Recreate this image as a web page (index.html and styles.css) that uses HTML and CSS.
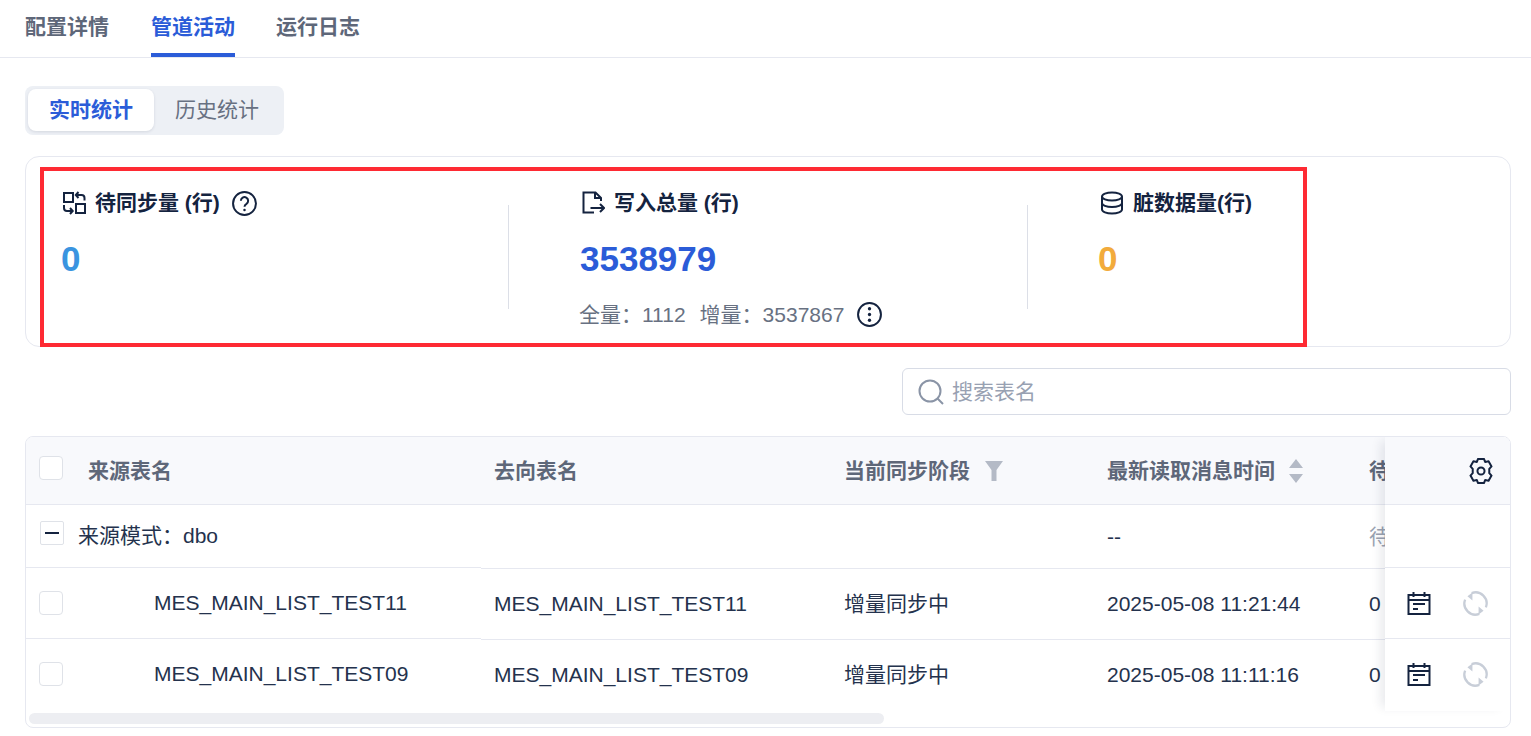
FILE: index.html
```html
<!DOCTYPE html>
<html lang="zh-CN">
<head>
    <meta charset="UTF-8">
    <title>管道活动</title>
    <link rel="stylesheet" href="styles.css">
</head>
<body>

<div class="tabs">
    <div class="tab">配置详情</div>
    <div class="tab tab-active">管道活动</div>
    <div class="tab">运行日志</div>
</div>

<div class="content">
    <div class="segment">
        <div class="segment-item segment-active">实时统计</div>
        <div class="segment-item">历史统计</div>
    </div>

    <div class="stat-card">
        <div class="stat">
            <div class="stat-label">
                <svg class="stat-icon" viewBox="0 0 24 24" fill="none" stroke="currentColor" stroke-width="2">
                    <rect x="2" y="2" width="9" height="9"/>
                    <rect x="14" y="13" width="9" height="9"/>
                    <path d="M14 4h5.500a3 3 0 0 1 3 3v2.500M16.500 1 13.800 4l2.700 3"/>
                    <path d="M10.500 20H5a3 3 0 0 1-3-3v-3M8 17 10.700 20 8 23"/>
                </svg>
                <span>待同步量 (行)</span>
                <svg class="stat-help" viewBox="0 0 24 24" fill="none" stroke="currentColor" stroke-width="1.900">
                    <circle cx="12" cy="12" r="11"/>
                    <path d="M8.500 9.300a3.500 3.500 0 1 1 5.400 3c-1.300.8-1.900 1.500-1.900 2.900"/>
                    <circle cx="12" cy="18.300" r="1.200" fill="currentColor" stroke="none"/>
                </svg>
            </div>
            <div class="stat-value value-sky">0</div>
        </div>
        <div class="stat-divider"></div>
        <div class="stat">
            <div class="stat-label">
                <svg class="stat-icon" viewBox="0 0 24 24" fill="none" stroke="currentColor" stroke-width="2">
                    <path d="M20 10V7l-5.500-5.500H2.500v20H13"/>
                    <path d="M14 1.500V7h6"/>
                    <path d="M9.500 17H23M19 13l4 4-4 4"/>
                </svg>
                <span>写入总量 (行)</span>
            </div>
            <div class="stat-value value-blue">3538979</div>
            <div class="stat-sub">
                <span>全量：1112</span>
                <span>增量：3537867</span>
                <svg class="stat-help" viewBox="0 0 24 24" fill="none" stroke="#14233f" stroke-width="1.900">
                    <circle cx="12" cy="12" r="11"/>
                    <circle cx="12" cy="6.500" r="1.600" fill="#14233f" stroke="none"/>
                    <circle cx="12" cy="12" r="1.600" fill="#14233f" stroke="none"/>
                    <circle cx="12" cy="17.500" r="1.600" fill="#14233f" stroke="none"/>
                </svg>
            </div>
        </div>
        <div class="stat-divider"></div>
        <div class="stat stat-last">
            <div class="stat-label">
                <svg class="stat-icon" viewBox="0 0 24 24" fill="none" stroke="currentColor" stroke-width="2">
                    <ellipse cx="12" cy="5.500" rx="10" ry="4"/>
                    <path d="M2 5.500v13c0 2.200 4.500 4 10 4s10-1.800 10-4v-13"/>
                    <path d="M2 12c0 2.200 4.500 4 10 4s10-1.800 10-4"/>
                </svg>
                <span>脏数据量(行)</span>
            </div>
            <div class="stat-value value-orange">0</div>
        </div>
        <div class="highlight-box"></div>
    </div>

    <div class="search-row">
        <div class="search-box">
            <svg class="search-icon" viewBox="0 0 26 26" fill="none" stroke="#8a94a6" stroke-width="2">
                <circle cx="12" cy="12" r="10.500"/>
                <path d="M19.500 19.500 25 25"/>
            </svg>
            <span>搜索表名</span>
        </div>
    </div>

    <div class="data-table">
        <div class="table-body">
            <div class="pane-left">
                <div class="left-row head-row">
                    <span class="checkbox"></span>
                    <span class="head-title">来源表名</span>
                </div>
                <div class="left-row group-row">
                    <span class="checkbox checkbox-minus"></span>
                    <span class="group-title">来源模式：dbo</span>
                </div>
                <div class="left-row item-row">
                    <span class="checkbox"></span>
                    <span class="item-name">MES_MAIN_LIST_TEST11</span>
                </div>
                <div class="left-row item-row item-last">
                    <span class="checkbox"></span>
                    <span class="item-name">MES_MAIN_LIST_TEST09</span>
                </div>
            </div>

            <div class="pane-middle">
                <div class="mid-row head-row">
                    <div class="head-title">去向表名</div>
                    <div class="head-title head-cell">
                        当前同步阶段
                        <svg class="head-filter" viewBox="0 0 18 20"><path d="M0 0h18l-6.500 9v11H6.500V9z" fill="#b4bac6"/></svg>
                    </div>
                    <div class="head-title head-cell">
                        最新读取消息时间
                        <svg class="head-sort" viewBox="0 0 14 24"><path d="M7 0l7 9H0zM0 15h14l-7 9z" fill="#b4bac6"/></svg>
                    </div>
                    <div class="head-title">待同步量</div>
                </div>
                <div class="mid-row group-mid">
                    <div></div>
                    <div></div>
                    <div>--</div>
                    <div class="cell-muted">待同步量</div>
                </div>
                <div class="mid-row item-mid">
                    <div>MES_MAIN_LIST_TEST11</div>
                    <div>增量同步中</div>
                    <div>2025-05-08 11:21:44</div>
                    <div>0</div>
                </div>
                <div class="mid-row item-mid item-last">
                    <div>MES_MAIN_LIST_TEST09</div>
                    <div>增量同步中</div>
                    <div>2025-05-08 11:11:16</div>
                    <div>0</div>
                </div>
            </div>

            <div class="pane-right">
                <div class="right-row head-row right-head">
                    <svg class="gear-icon" viewBox="2 1 20 22" fill="none" stroke="#14233f" stroke-width="1.700" stroke-linejoin="round">
                        <path d="M9.500 1.800h5l1 2.500 2.900-.5 2.500 4.300-1.900 2.100v3.600l1.900 2.100-2.500 4.300-2.900-.5-1 2.500h-5l-1-2.500-2.900.5-2.500-4.300 1.900-2.100v-3.600l-1.900-2.100 2.500-4.300 2.900.5z"/>
                        <circle cx="12" cy="12" r="3"/>
                    </svg>
                </div>
                <div class="right-row group-right"></div>
                <div class="right-row action-row">
                    <svg class="cal-icon" viewBox="0 0 24 24" fill="none" stroke="#14233f" stroke-width="2">
                        <path d="M1.500 4h21v19h-21zM1.500 9h21M6.500 1v5M17.500 1v5M6 13h12M6 18h5"/>
                    </svg>
                    <svg class="sync-icon" viewBox="0 0 26 26" fill="none" stroke="#c8ced8" stroke-width="2.400">
                        <path d="M9 2.200A11.500 11.500 0 0 1 23.800 17"/>
                        <path d="M17 23.800A11.500 11.500 0 0 1 2.200 9"/>
                        <path d="M9.800 1.500v8.500L4.600 5.500zM16.200 24.500V16l5.200 4.500z" fill="#c8ced8" stroke="none"/>
                    </svg>
                </div>
                <div class="right-row action-row item-last">
                    <svg class="cal-icon" viewBox="0 0 24 24" fill="none" stroke="#14233f" stroke-width="2">
                        <path d="M1.500 4h21v19h-21zM1.500 9h21M6.500 1v5M17.500 1v5M6 13h12M6 18h5"/>
                    </svg>
                    <svg class="sync-icon" viewBox="0 0 26 26" fill="none" stroke="#c8ced8" stroke-width="2.400">
                        <path d="M9 2.200A11.500 11.500 0 0 1 23.800 17"/>
                        <path d="M17 23.800A11.500 11.500 0 0 1 2.200 9"/>
                        <path d="M9.800 1.500v8.500L4.600 5.500zM16.200 24.500V16l5.200 4.500z" fill="#c8ced8" stroke="none"/>
                    </svg>
                </div>
            </div>
        </div>
        <div class="table-scroll">
            <div class="table-thumb"></div>
        </div>
    </div>
</div>

</body>
</html>
```

FILE: styles.css
```css
:root {
    --blue: #2b5cd8;
    --dark: #14233f;
    --text: #24324d;
    --gray: #5e6779;
    --line: #e6e8f0;
}

body {
    margin: 0;
    height: 736px;
    overflow: hidden;
    background-color: #fff;
    color: var(--text);
    font-family: "Liberation Sans", "Noto Sans CJK SC", sans-serif;
    font-size: 21px;
    line-height: 24px;
}

/* top tabs */
.tabs {
    display: flex;
    gap: 42px;
    height: 57px;
    padding-left: 25px;
    border-bottom: 1px solid var(--line);
}

.tab {
    height: 57px;
    line-height: 54px;
    box-sizing: border-box;
    font-weight: 700;
    color: var(--gray);
}

.tab-active {
    margin-right: -1px;
    color: var(--blue);
    border-bottom: 4px solid var(--blue);
}

.content {
    padding: 28px 20px 0 25px;
}

/* realtime / history switch */
.segment {
    display: flex;
    width: 259px;
    height: 49px;
    box-sizing: border-box;
    padding: 3px;
    border-radius: 8px;
    background-color: #edf0f5;
}

.segment-item {
    width: 126px;
    height: 42px;
    line-height: 42px;
    text-align: center;
    color: #687182;
}

.segment-active {
    font-weight: 700;
    color: var(--blue);
    background-color: #fff;
    border-radius: 8px;
    box-shadow: 0 1px 3px rgba(30, 40, 70, 0.12);
}

/* stat card */
.stat-card {
    position: relative;
    display: flex;
    height: 191px;
    box-sizing: border-box;
    margin-top: 21px;
    padding: 32px 0 0 35px;
    border: 1px solid var(--line);
    border-radius: 14px;
}

.highlight-box {
    position: absolute;
    left: 14px;
    top: 10px;
    width: 1267px;
    height: 180px;
    box-sizing: border-box;
    border: 4px solid #fe2a33;
}

.stat {
    width: 447px;
}

.stat-last {
    width: auto;
}

.stat-divider {
    width: 1px;
    height: 104px;
    margin: 16px 71px 0 0;
    background-color: #dcdfe7;
}

.stat-label {
    display: flex;
    align-items: center;
    gap: 9px;
    height: 28px;
    font-weight: 700;
    color: var(--dark);
}

.stat-icon {
    width: 24px;
    height: 24px;
    margin-left: 1px;
    flex-shrink: 0;
}

.stat-help {
    width: 25px;
    height: 25px;
    margin-left: 3px;
    flex-shrink: 0;
}

.stat-value {
    margin-top: 18px;
    height: 48px;
    line-height: 48px;
    font-size: 35px;
    font-weight: 700;
}

.value-sky {
    color: #3a94e0;
}

.value-blue {
    color: var(--blue);
}

.value-orange {
    margin-left: -1px;
    color: #f2ab3c;
}

.stat-sub {
    display: flex;
    align-items: center;
    gap: 14px;
    margin-top: 19px;
    margin-left: -1px;
    color: #687182;
    white-space: nowrap;
}

.stat-sub .stat-help {
    margin-left: -1px;
}

/* search */
.search-row {
    display: flex;
    justify-content: flex-end;
    margin-top: 21px;
}

.search-box {
    display: flex;
    align-items: center;
    gap: 8px;
    width: 609px;
    height: 47px;
    box-sizing: border-box;
    padding-left: 15px;
    border: 1px solid #d8dce6;
    border-radius: 6px;
    color: #98a1b2;
}

.search-icon {
    width: 26px;
    height: 26px;
}

/* table */
.data-table {
    margin-top: 21px;
    height: 292px;
    box-sizing: border-box;
    border: 1px solid var(--line);
    border-radius: 8px;
    overflow: hidden;
}

.table-body {
    display: flex;
    height: 274px;
}

.head-row {
    height: 67px;
    background-color: #f8f9fc;
    border-bottom: 1px solid var(--line);
}

.head-title {
    font-weight: 700;
    color: var(--gray);
    white-space: nowrap;
}

.pane-left {
    width: 455px;
    flex-shrink: 0;
}

.left-row {
    display: flex;
    align-items: center;
    padding-left: 13px;
    border-bottom: 1px solid var(--line);
}

.left-row .head-title {
    margin-left: 25px;
}

.left-row.head-row .checkbox {
    margin-top: -5px;
}

.group-row {
    height: 62px;
    padding-left: 14px;
}

.item-row {
    height: 70px;
}

.checkbox {
    width: 22px;
    height: 22px;
    flex-shrink: 0;
    border: 1px solid #dfe2e8;
    border-radius: 4px;
    background-color: #fff;
}

.checkbox-minus {
    position: relative;
    margin-top: -6px;
    border-radius: 2px;
}

.checkbox-minus::after {
    content: "";
    position: absolute;
    left: 4px;
    top: 10px;
    width: 14px;
    height: 2px;
    background-color: var(--dark);
}

.group-title {
    margin-left: 14px;
}

.item-name {
    margin-left: 91px;
    white-space: nowrap;
}

.pane-middle {
    flex: 1;
    min-width: 0;
    overflow: hidden;
}

.mid-row {
    display: grid;
    grid-template-columns: 350px 263px 262px 200px;
    align-items: center;
    padding-left: 13px;
    border-bottom: 1px solid var(--line);
    white-space: nowrap;
}

.head-cell {
    display: flex;
    align-items: center;
}

.head-filter {
    width: 18px;
    height: 20px;
    margin-left: 15px;
}

.head-sort {
    width: 14px;
    height: 24px;
    margin-left: 14px;
}

.group-mid {
    height: 63px;
}

.item-mid {
    height: 70px;
}

.cell-muted {
    color: #9aa2b1;
}

.pane-right {
    position: relative;
    width: 125px;
    flex-shrink: 0;
    background-color: #fff;
    box-shadow: -8px 0 10px -4px rgba(30, 40, 70, 0.1);
}

.right-row {
    border-bottom: 1px solid var(--line);
}

.right-head {
    display: flex;
    align-items: center;
    justify-content: flex-end;
    padding-right: 17px;
}

.group-right {
    height: 62px;
}

.action-row {
    display: flex;
    align-items: center;
    height: 70px;
    padding-left: 22px;
    gap: 32px;
}

.gear-icon {
    width: 24px;
    height: 26px;
}

.cal-icon {
    width: 24px;
    height: 24px;
}

.sync-icon {
    width: 25px;
    height: 25px;
}

.table-scroll {
    padding: 2px 0 0 3px;
}

.table-thumb {
    width: 855px;
    height: 11px;
    border-radius: 6px;
    background-color: #edeef2;
}

/* last row sits on the scrollbar, no line under it */
.left-row.item-last,
.mid-row.item-last,
.right-row.item-last {
    border-bottom: none;
}
```
